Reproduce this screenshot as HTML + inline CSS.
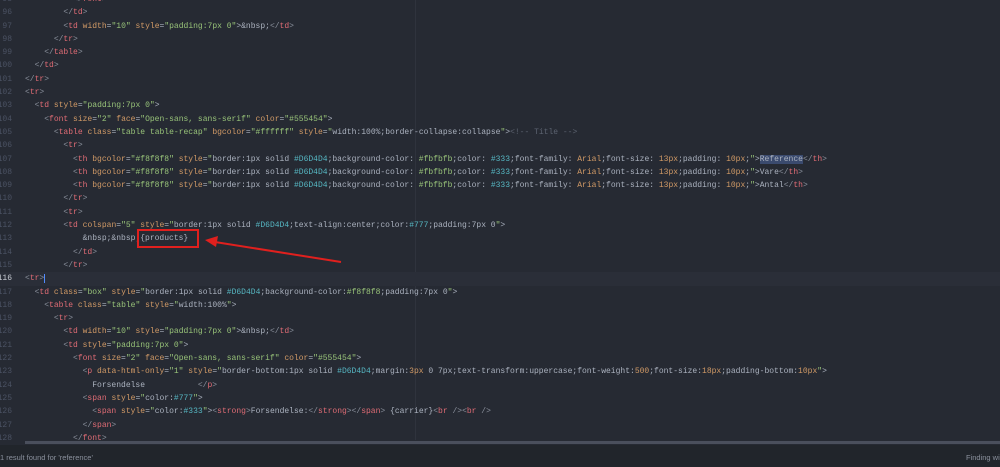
<!DOCTYPE html>
<html><head><meta charset="utf-8"><style>
html,body{margin:0;padding:0;width:1000px;height:467px;overflow:hidden;background:#262a33;}
#code{position:absolute;left:0;top:-7px;width:1000px;font-family:"Liberation Mono",monospace;font-size:8px;line-height:13.3px;color:#abb2bf;}
.l{height:13.3px;position:relative;}
.g{position:absolute;left:-10px;width:22px;text-align:right;color:#4b5263;}
.x{position:absolute;left:25px;white-space:pre;}
.cur{background:#2a2e38;}
.cur .g{color:#c8ccd4;}
.t{color:#e06c75}.a{color:#d19a66}.s{color:#98c379}.c{color:#5c6370}.h{color:#56b6c2}.o{color:#d19a66}.p{color:#8a909c}
.sel{background:#3a4a6e;}
#box{position:absolute;left:137px;top:229px;width:62px;height:19px;border:2px solid #e0201e;box-sizing:border-box;}
#guide{position:absolute;left:415px;top:0;width:1px;height:440px;background:#2f333d;}
#scroll{position:absolute;left:25px;top:441px;width:975px;height:3px;background:#4a4f5c;}
#status{position:absolute;left:0;top:445px;width:1000px;height:22px;background:#21252b;font-family:"Liberation Sans",sans-serif;font-size:7.5px;color:#8a909c;}
</style></head><body>
<div id="guide"></div>
<div id="code"><div class="l"><span class="g">95</span><span class="x">          <span class="p">&lt;/</span><span class="t">font</span><span class="p">&gt;</span></span></div><div class="l"><span class="g">96</span><span class="x">        <span class="p">&lt;/</span><span class="t">td</span><span class="p">&gt;</span></span></div><div class="l"><span class="g">97</span><span class="x">        <span class="p">&lt;</span><span class="t">td</span> <span class="a">width</span>=<span class="s">"10"</span> <span class="a">style</span>=<span class="s">"padding:7px 0"</span>&gt;&amp;nbsp;<span class="p">&lt;/</span><span class="t">td</span><span class="p">&gt;</span></span></div><div class="l"><span class="g">98</span><span class="x">      <span class="p">&lt;/</span><span class="t">tr</span><span class="p">&gt;</span></span></div><div class="l"><span class="g">99</span><span class="x">    <span class="p">&lt;/</span><span class="t">table</span><span class="p">&gt;</span></span></div><div class="l"><span class="g">100</span><span class="x">  <span class="p">&lt;/</span><span class="t">td</span><span class="p">&gt;</span></span></div><div class="l"><span class="g">101</span><span class="x"><span class="p">&lt;/</span><span class="t">tr</span><span class="p">&gt;</span></span></div><div class="l"><span class="g">102</span><span class="x"><span class="p">&lt;</span><span class="t">tr</span><span class="p">&gt;</span></span></div><div class="l"><span class="g">103</span><span class="x">  <span class="p">&lt;</span><span class="t">td</span> <span class="a">style</span>=<span class="s">"padding:7px 0"</span>&gt;</span></div><div class="l"><span class="g">104</span><span class="x">    <span class="p">&lt;</span><span class="t">font</span> <span class="a">size</span>=<span class="s">"2"</span> <span class="a">face</span>=<span class="s">"Open-sans, sans-serif"</span> <span class="a">color</span>=<span class="s">"#555454"</span>&gt;</span></div><div class="l"><span class="g">105</span><span class="x">      <span class="p">&lt;</span><span class="t">table</span> <span class="a">class</span>=<span class="s">"table table-recap"</span> <span class="a">bgcolor</span>=<span class="s">"#ffffff"</span> <span class="a">style</span>=<span class="s">"</span>width:100%;border-collapse:collapse<span class="s">"</span>&gt;<span class="c">&lt;!-- Title --&gt;</span></span></div><div class="l"><span class="g">106</span><span class="x">        <span class="p">&lt;</span><span class="t">tr</span><span class="p">&gt;</span></span></div><div class="l"><span class="g">107</span><span class="x">          <span class="p">&lt;</span><span class="t">th</span> <span class="a">bgcolor</span>=<span class="s">"#f8f8f8"</span> <span class="a">style</span>=<span class="s">"</span>border:1px solid <span class="h">#D6D4D4</span>;background-color: <span class="s">#fbfbfb</span>;color: <span class="h">#333</span>;font-family: <span class="o">Arial</span>;font-size: <span class="o">13px</span>;padding: <span class="o">10px</span>;<span class="s">"</span>&gt;<span class="sel">Reference</span><span class="p">&lt;/</span><span class="t">th</span><span class="p">&gt;</span></span></div><div class="l"><span class="g">108</span><span class="x">          <span class="p">&lt;</span><span class="t">th</span> <span class="a">bgcolor</span>=<span class="s">"#f8f8f8"</span> <span class="a">style</span>=<span class="s">"</span>border:1px solid <span class="h">#D6D4D4</span>;background-color: <span class="s">#fbfbfb</span>;color: <span class="h">#333</span>;font-family: <span class="o">Arial</span>;font-size: <span class="o">13px</span>;padding: <span class="o">10px</span>;<span class="s">"</span>&gt;Vare<span class="p">&lt;/</span><span class="t">th</span><span class="p">&gt;</span></span></div><div class="l"><span class="g">109</span><span class="x">          <span class="p">&lt;</span><span class="t">th</span> <span class="a">bgcolor</span>=<span class="s">"#f8f8f8"</span> <span class="a">style</span>=<span class="s">"</span>border:1px solid <span class="h">#D6D4D4</span>;background-color: <span class="s">#fbfbfb</span>;color: <span class="h">#333</span>;font-family: <span class="o">Arial</span>;font-size: <span class="o">13px</span>;padding: <span class="o">10px</span>;<span class="s">"</span>&gt;Antal<span class="p">&lt;/</span><span class="t">th</span><span class="p">&gt;</span></span></div><div class="l"><span class="g">110</span><span class="x">        <span class="p">&lt;/</span><span class="t">tr</span><span class="p">&gt;</span></span></div><div class="l"><span class="g">111</span><span class="x">        <span class="p">&lt;</span><span class="t">tr</span><span class="p">&gt;</span></span></div><div class="l"><span class="g">112</span><span class="x">        <span class="p">&lt;</span><span class="t">td</span> <span class="a">colspan</span>=<span class="s">"5"</span> <span class="a">style</span>=<span class="s">"</span>border:1px solid <span class="h">#D6D4D4</span>;text-align:center;color:<span class="h">#777</span>;padding:7px 0<span class="s">"</span>&gt;</span></div><div class="l"><span class="g">113</span><span class="x">            &amp;nbsp;&amp;nbsp;{products}</span></div><div class="l"><span class="g">114</span><span class="x">          <span class="p">&lt;/</span><span class="t">td</span><span class="p">&gt;</span></span></div><div class="l"><span class="g">115</span><span class="x">        <span class="p">&lt;/</span><span class="t">tr</span><span class="p">&gt;</span></span></div><div class="l cur"><span class="g">116</span><span class="x"><span class="p">&lt;</span><span class="t">tr</span><span class="p">&gt;</span><span style="border-left:1px solid #528bff"></span></span></div><div class="l"><span class="g">117</span><span class="x">  <span class="p">&lt;</span><span class="t">td</span> <span class="a">class</span>=<span class="s">"box"</span> <span class="a">style</span>=<span class="s">"</span>border:1px solid <span class="h">#D6D4D4</span>;background-color:<span class="s">#f8f8f8</span>;padding:7px 0<span class="s">"</span>&gt;</span></div><div class="l"><span class="g">118</span><span class="x">    <span class="p">&lt;</span><span class="t">table</span> <span class="a">class</span>=<span class="s">"table"</span> <span class="a">style</span>=<span class="s">"</span>width:100%<span class="s">"</span>&gt;</span></div><div class="l"><span class="g">119</span><span class="x">      <span class="p">&lt;</span><span class="t">tr</span><span class="p">&gt;</span></span></div><div class="l"><span class="g">120</span><span class="x">        <span class="p">&lt;</span><span class="t">td</span> <span class="a">width</span>=<span class="s">"10"</span> <span class="a">style</span>=<span class="s">"padding:7px 0"</span>&gt;&amp;nbsp;<span class="p">&lt;/</span><span class="t">td</span><span class="p">&gt;</span></span></div><div class="l"><span class="g">121</span><span class="x">        <span class="p">&lt;</span><span class="t">td</span> <span class="a">style</span>=<span class="s">"padding:7px 0"</span>&gt;</span></div><div class="l"><span class="g">122</span><span class="x">          <span class="p">&lt;</span><span class="t">font</span> <span class="a">size</span>=<span class="s">"2"</span> <span class="a">face</span>=<span class="s">"Open-sans, sans-serif"</span> <span class="a">color</span>=<span class="s">"#555454"</span>&gt;</span></div><div class="l"><span class="g">123</span><span class="x">            <span class="p">&lt;</span><span class="t">p</span> <span class="a">data-html-only</span>=<span class="s">"1"</span> <span class="a">style</span>=<span class="s">"</span>border-bottom:1px solid <span class="h">#D6D4D4</span>;margin:<span class="o">3px</span> 0 7px;text-transform:uppercase;font-weight:<span class="o">500</span>;font-size:<span class="o">18px</span>;padding-bottom:<span class="o">10px</span><span class="s">"</span>&gt;</span></div><div class="l"><span class="g">124</span><span class="x">              Forsendelse           <span class="p">&lt;/</span><span class="t">p</span><span class="p">&gt;</span></span></div><div class="l"><span class="g">125</span><span class="x">            <span class="p">&lt;</span><span class="t">span</span> <span class="a">style</span>=<span class="s">"</span>color:<span class="h">#777</span><span class="s">"</span>&gt;</span></div><div class="l"><span class="g">126</span><span class="x">              <span class="p">&lt;</span><span class="t">span</span> <span class="a">style</span>=<span class="s">"</span>color:<span class="h">#333</span><span class="s">"</span>&gt;<span class="p">&lt;</span><span class="t">strong</span><span class="p">&gt;</span>Forsendelse:<span class="p">&lt;/</span><span class="t">strong</span><span class="p">&gt;&lt;/</span><span class="t">span</span><span class="p">&gt;</span> {carrier}<span class="p">&lt;</span><span class="t">br</span> <span class="p">/&gt;&lt;</span><span class="t">br</span> <span class="p">/&gt;</span></span></div><div class="l"><span class="g">127</span><span class="x">            <span class="p">&lt;/</span><span class="t">span</span><span class="p">&gt;</span></span></div><div class="l"><span class="g">128</span><span class="x">          <span class="p">&lt;/</span><span class="t">font</span><span class="p">&gt;</span></span></div></div>
<div id="box"></div>
<svg style="position:absolute;left:0;top:0" width="1000" height="467">
<line x1="341" y1="262" x2="215" y2="242" stroke="#e0201e" stroke-width="2"/>
<polygon points="205,240 218,236 216,247" fill="#e0201e"/>
</svg>
<div id="scroll"></div>
<div id="status"><span style="position:absolute;left:0;top:8px">1 result found for 'reference'</span><span style="position:absolute;left:966px;top:8px">Finding wi</span></div>
</body></html>
